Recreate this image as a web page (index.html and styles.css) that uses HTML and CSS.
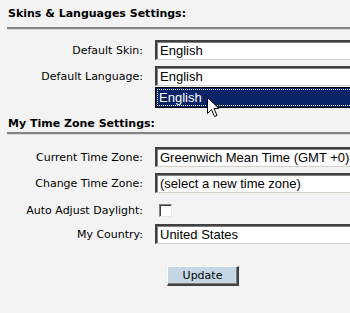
FILE: index.html
```html
<!DOCTYPE html>
<html>
<head>
  <title>Settings</title>
  <link rel="stylesheet" href="styles.css">
</head>
<body>

  <!-- Skins and languages -->
  <h2 class="section-title">Skins &amp; Languages Settings:</h2>
  <div class="rule"></div>

  <div class="form">
    <div class="row">
      <span class="label">Default Skin:</span>
      <div class="field">English</div>
    </div>
    <div class="row">
      <span class="label">Default Language:</span>
      <div class="field-wrap">
        <div class="field">English</div>
        <!-- open dropdown list -->
        <div class="dropdown">
          <div class="option selected">English</div>
        </div>
        <svg class="cursor" width="13" height="21" viewBox="0 0 13 21">
          <path d="M0.5 0.5 L0.5 16.5 L4.5 12.5 L7.5 19.5 L10 18.5 L7 11.5 L12 11.5 Z" fill="#fff" stroke="#000" stroke-width="1"/>
        </svg>
      </div>
    </div>
  </div>

  <!-- Time zone -->
  <h2 class="section-title second">My Time Zone Settings:</h2>
  <div class="rule"></div>

  <div class="form">
    <div class="row">
      <span class="label">Current Time Zone:</span>
      <div class="field">Greenwich Mean Time (GMT +0)</div>
    </div>
    <div class="row">
      <span class="label">Change Time Zone:</span>
      <div class="field">(select a new time zone)</div>
    </div>
    <div class="row check-row">
      <span class="label">Auto Adjust Daylight:</span>
      <span class="checkbox"></span>
    </div>
    <div class="row">
      <span class="label">My Country:</span>
      <div class="field">United States</div>
    </div>
    <div class="actions">
      <button type="button" class="btn">Update</button>
    </div>
  </div>

</body>
</html>
```

FILE: styles.css
```css
body {
  margin: 0;
  padding: 7px 0 0 0;
  background-color: #f3f3f3;
  font-family: "DejaVu Sans", Verdana, sans-serif;
  font-size: 11px;
  color: #000;
  overflow: hidden;
}
.section-title {
  margin: 0 0 0 8px;
  font-size: 11px;
  line-height: 14px;
  font-weight: bold;
}
.section-title.second {
  margin-top: 25px;
}
.rule {
  margin: 6px 0 10px 7px;
  height: 0;
  border-top: 2px solid #858585;
  border-bottom: 1px solid #dedcd4;
}
.section-title.second + .rule {
  margin-top: 1px;
  margin-bottom: 12px;
}
.form {
  display: flex;
  flex-direction: column;
}
.row {
  display: flex;
  align-items: center;
  height: 20px;
  margin-bottom: 6px;
}
.check-row {
  margin-top: 1px;
  margin-bottom: 4px;
}
.label {
  width: 143px;
  margin-right: 12px;
  text-align: right;
  flex-shrink: 0;
}
.field-wrap {
  position: relative;
  flex: 1;
  min-width: 0;
}
.field {
  flex: 1;
  min-width: 0;
  box-sizing: border-box;
  height: 20px;
  padding: 1px 0 0 3px;
  background: #fff;
  border-top: 2px solid #404040;
  border-left: 2px solid #404040;
  border-bottom: 1px solid #d4d0c8;
  box-shadow: inset 1px 1px 0 #808080;
  font-family: "Liberation Sans", Arial, sans-serif;
  font-size: 13px;
  line-height: 16px;
  white-space: nowrap;
  overflow: hidden;
}
.dropdown {
  position: absolute;
  top: 21px;
  left: 0;
  right: 0;
  background: #0a246a;
  border: 1px solid #000;
  border-right: none;
  box-sizing: border-box;
  padding: 1px 0 1px 1px;
}
.option {
  height: 15px;
  padding: 0 0 0 1px;
  border: 1px dotted #fffbd0;
  border-right: none;
  color: #fff;
  font-family: "Liberation Sans", Arial, sans-serif;
  font-size: 13px;
  line-height: 15px;
}
.cursor {
  position: absolute;
  top: 31px;
  left: 52px;
}
.checkbox {
  display: block;
  box-sizing: border-box;
  width: 13px;
  height: 13px;
  margin-left: 4px;
  background: #fff;
  border-top: 1px solid #808080;
  border-left: 1px solid #808080;
  border-bottom: 1px solid #e8e8e8;
  border-right: 1px solid #e8e8e8;
  box-shadow: inset 1px 1px 0 #404040;
}
.actions {
  padding: 16px 0 0 167px;
}
.btn {
  box-sizing: border-box;
  width: 72px;
  height: 20px;
  padding: 0;
  background-color: #c4d7e4;
  border-top: 1px solid #fff;
  border-left: 1px solid #fff;
  border-bottom: 2px solid #404040;
  border-right: 2px solid #404040;
  box-shadow: inset -1px -1px 0 #808080;
  font-family: "DejaVu Sans", Verdana, sans-serif;
  font-size: 11px;
  color: #000;
  cursor: pointer;
}
```
